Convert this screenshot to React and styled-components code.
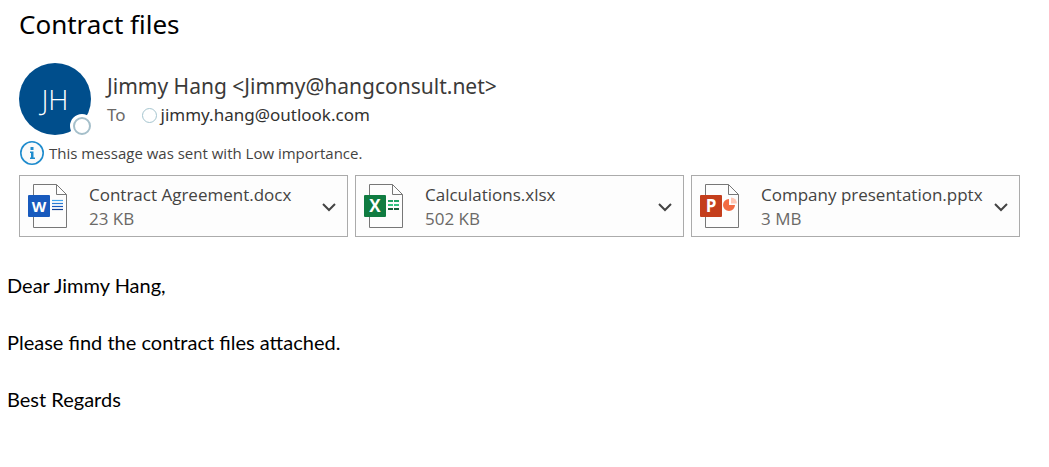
import React from "react";
import styled, { createGlobalStyle } from "styled-components";

const GlobalStyle = createGlobalStyle`
  *, *::before { box-sizing: border-box; }
  body {
    margin: 0;
    background: #ffffff;
    color: #000000;
    font-family: "Noto Sans", "Open Sans", sans-serif;
  }
`;

const Message = styled.main`
  display: flex;
  flex-direction: column;
`;

const Header = styled.header`
  display: flex;
  flex-direction: column;
  padding: 6px 29px 0 19px;
`;

const Subject = styled.h1`
  margin: 0;
  font-size: 26px;
  font-weight: 400;
  line-height: 36px;
`;

const Sender = styled.section`
  display: flex;
  gap: 16px;
  margin-top: 21px;
`;

const Avatar = styled.div`
  position: relative;
  display: flex;
  flex: none;
  align-items: center;
  justify-content: center;
  width: 72px;
  height: 72px;
  border-radius: 50%;
  background: #004e8c;
  color: #ffffff;
  font-family: "Open Sans", sans-serif;
  font-size: 28px;
  font-weight: 300;
`;

const Presence = styled.span`
  position: absolute;
  right: -3px;
  bottom: -3px;
  width: 24px;
  height: 24px;
  border: 3px solid #ffffff;
  border-radius: 50%;
  background: #ffffff;

  &::before {
    content: "";
    display: block;
    height: 18px;
    border: 2px solid #a5bfca;
    border-radius: 50%;
  }
`;

const Addresses = styled.div`
  display: flex;
  flex-direction: column;
  padding-top: 8px;
`;

const From = styled.div`
  color: #3b3a39;
  font-size: 21px;
  line-height: 30px;
`;

const Recipients = styled.div`
  display: flex;
  align-items: center;
  color: #6b6967;
  font-size: 17px;
  line-height: 28px;
`;

const RecipientStatus = styled.span`
  width: 15px;
  height: 15px;
  margin: 0 4px 0 16px;
  border: 1px solid #a5c5cf;
  border-radius: 50%;
`;

const Recipient = styled.span`
  color: #333231;
`;

const Notice = styled.p`
  display: flex;
  align-items: center;
  gap: 4px;
  margin: 5px 0 9px;
  color: #444342;
  font-family: "Open Sans", sans-serif;
  font-size: 15px;
  line-height: 26px;
`;

const Attachments = styled.ul`
  display: grid;
  grid-template-columns: repeat(3, minmax(0, 1fr));
  gap: 7px;
  margin: 0;
  padding: 0;
  list-style: none;
`;

const Attachment = styled.li`
  display: flex;
  align-items: flex-start;
  padding: 7px 0 5px 8px;
  border: 1px solid #ababab;
  background: #fdfdfd;
`;

const FileIcon = styled.svg`
  flex: none;
  width: 40px;
  height: 46px;
`;

const FileText = styled.div`
  flex: 1;
  min-width: 0;
  padding-left: 21px;
  font-family: "Open Sans", sans-serif;
  font-size: 17px;
  line-height: 24px;
  white-space: nowrap;
`;

const FileName = styled.div`
  color: #444342;
`;

const FileSize = styled.div`
  color: #6b6967;
`;

const MenuButton = styled.button`
  display: flex;
  flex: none;
  align-items: center;
  justify-content: center;
  width: 36px;
  height: 48px;
  padding: 0;
  border: 0;
  background: transparent;
  color: #444444;
`;

const Body = styled.article`
  padding: 34px 7px 0;
  font-family: Lato, "Open Sans", sans-serif;
  font-size: 20px;
  line-height: 29px;
`;

const Paragraph = styled.p`
  margin: 0 0 28px;
`;

const APPS = {
  word: {
    letter: "W",
    letterSize: 15,
    color: "#185abd",
    mark: (
      <g strokeWidth="1.200">
        <path d="M24 17.500h11" stroke="#41a5ee" />
        <path d="M24 20.500h11" stroke="#2b7cd3" />
        <path d="M24 23.500h11" stroke="#185abd" />
        <path d="M24 26.500h11" stroke="#103f91" />
      </g>
    ),
  },
  excel: {
    letter: "X",
    letterSize: 17,
    color: "#107c41",
    mark: (
      <g strokeWidth="2">
        <path d="M24 18h5m1 0h5" stroke="#21a366" />
        <path d="M24 22h5m1 0h5" stroke="#33c481" />
        <path d="M24 26h5m1 0h5" stroke="#185c37" />
      </g>
    ),
  },
  powerpoint: {
    letter: "P",
    letterSize: 17,
    color: "#c43e1c",
    mark: (
      <g>
        <path d="M29 16a6 6 0 1 0 6 6H29z" fill="#f26b43" />
        <path d="M31 14.500a6 6 0 0 1 6 6h-6z" fill="#ffc7b5" />
      </g>
    ),
  },
};

const FILES = [
  { name: "Contract Agreement.docx", size: "23 KB", app: "word" },
  { name: "Calculations.xlsx", size: "502 KB", app: "excel" },
  { name: "Company presentation.pptx", size: "3 MB", app: "powerpoint" },
];

function AppFileIcon({ app }) {
  const { letter, letterSize, color, mark } = APPS[app];
  return (
    <FileIcon viewBox="0 0 40 46" aria-hidden="true">
      <path
        d="M5.500 1.500H28.500L38.500 11.500V44.500H5.500zM28.500 1.500V11.500H38.500"
        fill="#fdfdfd"
        stroke="#777777"
      />
      {mark}
      <rect x="0" y="12" width="22" height="22" rx="1" fill={color} />
      <text
        x="11"
        y="29"
        textAnchor="middle"
        fill="#ffffff"
        fontFamily="Open Sans"
        fontSize={letterSize}
        fontWeight="700"
      >
        {letter}
      </text>
    </FileIcon>
  );
}

function InfoIcon() {
  return (
    <svg width="26" height="26" viewBox="0 0 26 26" aria-hidden="true">
      <circle cx="13" cy="13" r="11.200" fill="#fafafa" stroke="#1e8bcd" strokeWidth="1.600" />
      <path d="M11.500 7h3v3h-3zM11 11.500h3.500V17.500H16V19H11V17.500h1V13H11z" fill="#1e8bcd" />
    </svg>
  );
}

export default function App() {
  return (
    <>
      <GlobalStyle />
      <Message>
        <Header>
          <Subject>Contract files</Subject>
          <Sender>
            <Avatar>
              JH
              <Presence />
            </Avatar>
            <Addresses>
              <From>Jimmy Hang &lt;Jimmy@hangconsult.net&gt;</From>
              <Recipients>
                To
                <RecipientStatus />
                <Recipient>jimmy.hang@outlook.com</Recipient>
              </Recipients>
            </Addresses>
          </Sender>
          <Notice>
            <InfoIcon />
            This message was sent with Low importance.
          </Notice>
          <Attachments>
            {FILES.map((file) => (
              <Attachment key={file.name}>
                <AppFileIcon app={file.app} />
                <FileText>
                  <FileName>{file.name}</FileName>
                  <FileSize>{file.size}</FileSize>
                </FileText>
                <MenuButton type="button" aria-label={`Options for ${file.name}`}>
                  <svg width="16" height="10" viewBox="0 0 16 10" aria-hidden="true">
                    <path d="M2 2l6 6 6-6" fill="none" stroke="currentColor" strokeWidth="2" />
                  </svg>
                </MenuButton>
              </Attachment>
            ))}
          </Attachments>
        </Header>
        <Body>
          <Paragraph>Dear Jimmy Hang,</Paragraph>
          <Paragraph>Please find the contract files attached.</Paragraph>
          <Paragraph>Best Regards</Paragraph>
        </Body>
      </Message>
    </>
  );
}
